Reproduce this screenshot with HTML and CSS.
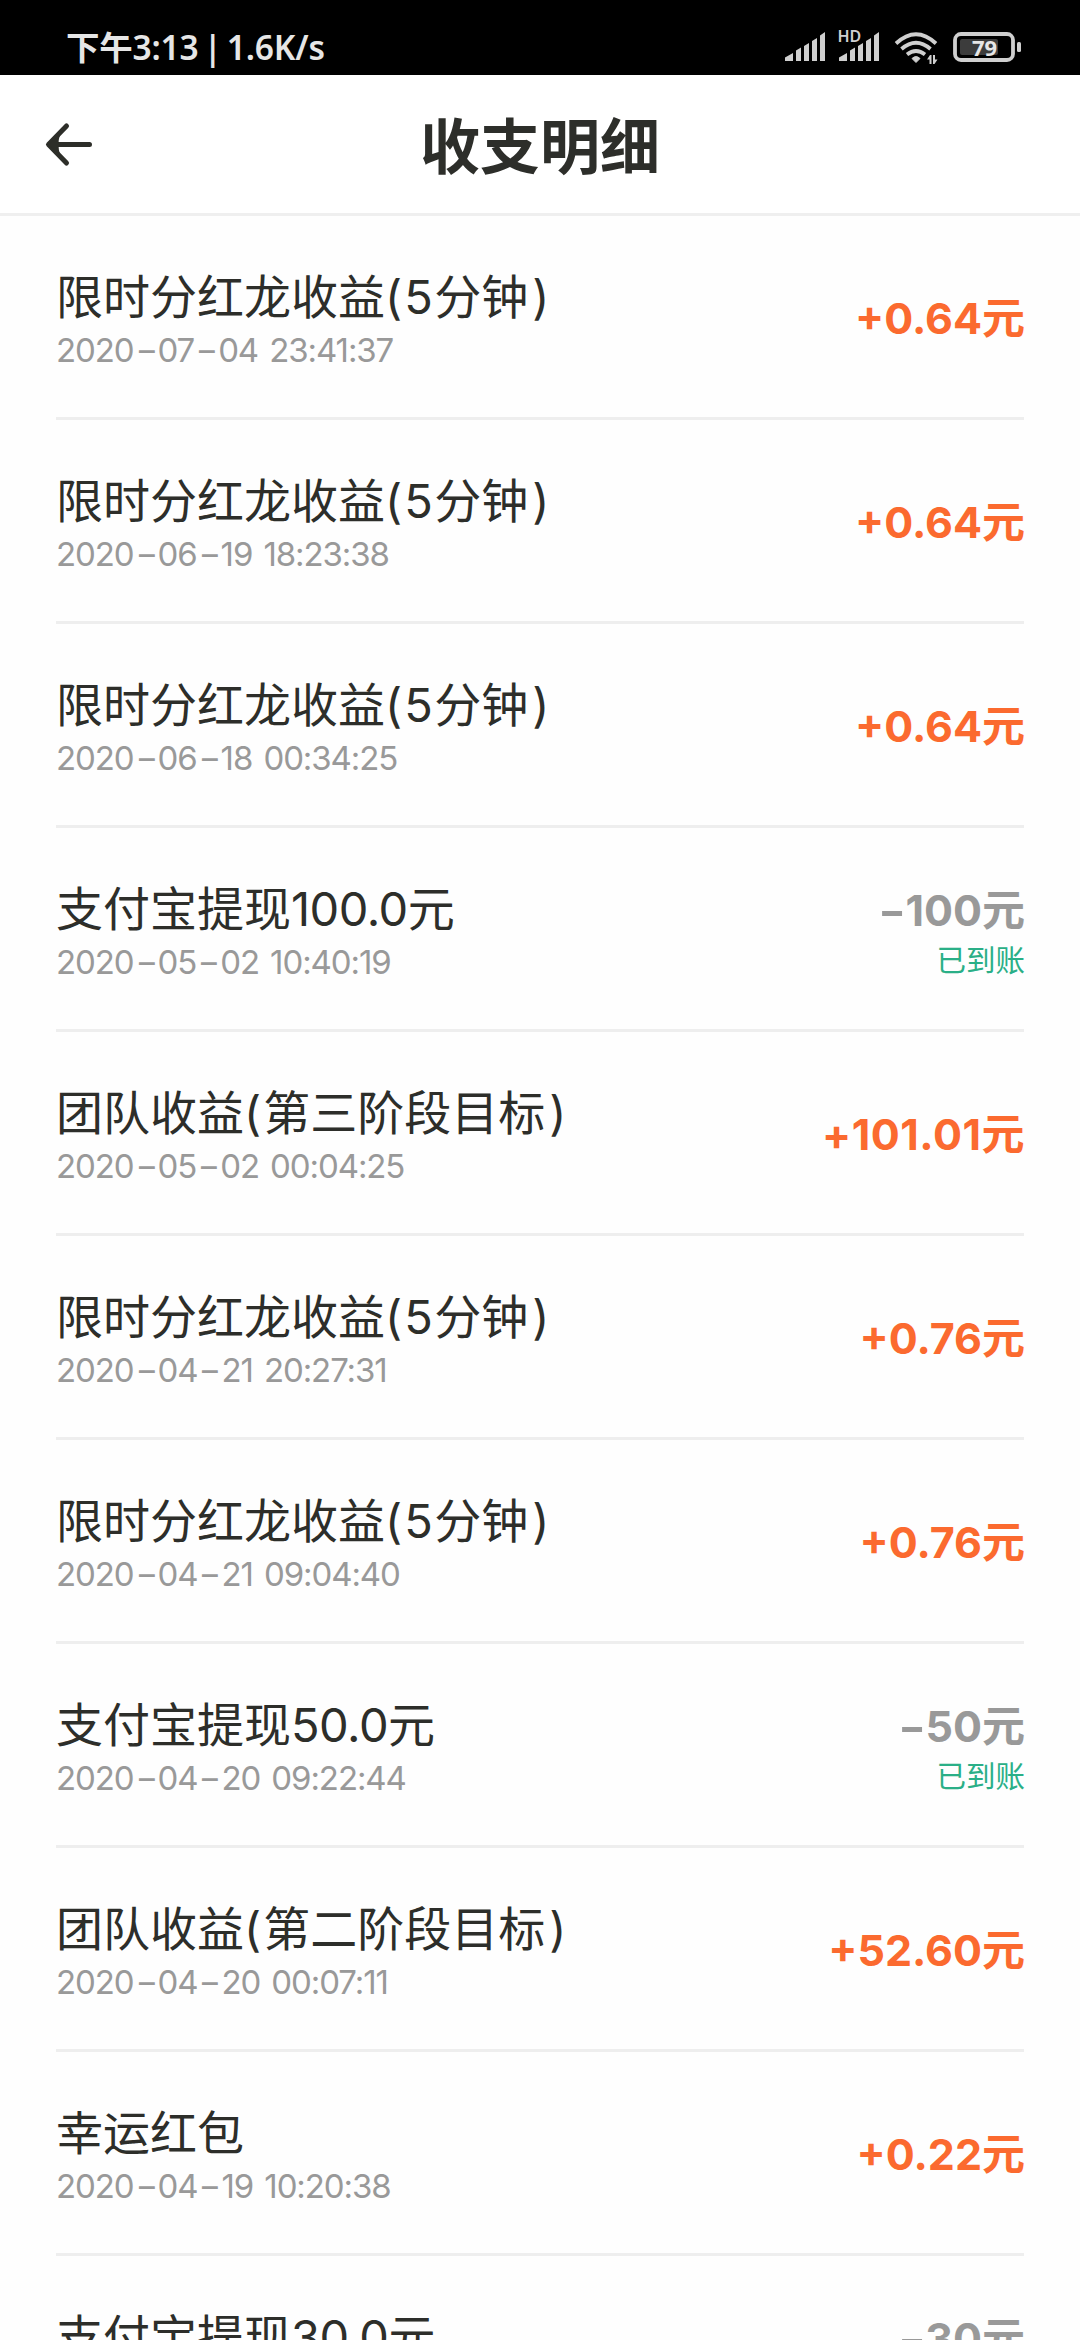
FILE: index.html
```html
<!DOCTYPE html>
<html lang="zh-CN">
<head>
<meta charset="utf-8">
<title>收支明细</title>
<link rel="stylesheet" href="styles.css">
</head>
<body>
<div class="statusbar">
  <div class="clock">下午3:13<span class="pipe">|</span>1.6K/s</div>
  <svg class="indicators" width="236" height="47" viewBox="784 20 236 47">
    <g fill="#cfcfcf">
      <path d="M784 61v-3.500l8-4.500v8zM795 61v-10.500l5-3v13.500zM803 61v-15l5-3v18zM811 61v-20l5-3v23zM819 61v-25.500l5-3.500v29z"/>
      <path d="M838 61v-3.500l8-4.500v8zM849 61v-10.500l5-3v13.500zM857 61v-15l5-3v18zM865 61v-20l5-3v23zM873 61v-25.500l5-3.500v29z"/>
      <path d="M911 58.500q4-3.800 8 0l-4 4z" stroke="#cfcfcf" stroke-width="1" stroke-linejoin="round"/>
      <path d="M926 59.500l3-4.500h1.500v9h-2v-4.500zM932 55h2v4.500h2.500l-3 4.500h-1.500z"/>
      <rect x="1016" y="42" width="4" height="10" rx="1.500"/>
    </g>
    <g fill="none" stroke="#cfcfcf" stroke-width="3.800">
      <path d="M895 43.500Q915 25 935 43.500M900.500 49Q915 36.500 929.500 49M906 54.500Q915 47.500 924 54.500"/>
      <rect x="954" y="34" width="58" height="26" rx="6"/>
    </g>
    <rect x="959" y="39" width="38" height="16" rx="2" fill="#3c3c3c"/>
    <text x="836.500" y="42" class="hd">HD</text>
    <text x="971" y="55.500" class="level">79</text>
  </svg>
</div>
<header class="navbar">
  <svg class="back" width="50" height="46" viewBox="0 0 50 46">
    <path d="M22.500 5 4.500 23.500 22.500 42M5 23.500H45.500" fill="none" stroke="#2d2e29" stroke-width="5" stroke-linecap="round" stroke-linejoin="round"/>
    <path d="M5 23.500l11-10q-3 10 0 20z" fill="#2d2e29"/>
  </svg>
  <h1 class="heading">收支明细</h1>
</header>
<main class="list">
  <section class="row">
    <div class="info"><div class="name">限时分红龙收益<span class="open">(</span><span class="five">5</span>分钟<span class="close">)</span></div><div class="time">2020<span class="dash">-</span>07<span class="dash">-</span>04 23:41:37</div></div>
    <div class="side"><div class="amount in">+0.64元</div></div>
  </section>
  <section class="row">
    <div class="info"><div class="name">限时分红龙收益<span class="open">(</span><span class="five">5</span>分钟<span class="close">)</span></div><div class="time">2020<span class="dash">-</span>06<span class="dash">-</span>19 18:23:38</div></div>
    <div class="side"><div class="amount in">+0.64元</div></div>
  </section>
  <section class="row">
    <div class="info"><div class="name">限时分红龙收益<span class="open">(</span><span class="five">5</span>分钟<span class="close">)</span></div><div class="time">2020<span class="dash">-</span>06<span class="dash">-</span>18 00:34:25</div></div>
    <div class="side"><div class="amount in">+0.64元</div></div>
  </section>
  <section class="row">
    <div class="info"><div class="name">支付宝提现<span class="num">100.0</span>元</div><div class="time">2020<span class="dash">-</span>05<span class="dash">-</span>02 10:40:19</div></div>
    <div class="side raised"><div class="amount out"><span class="dash">-</span>100元</div><div class="state">已到账</div></div>
  </section>
  <section class="row">
    <div class="info"><div class="name">团队收益<span class="open">(</span>第三阶段目标<span class="close">)</span></div><div class="time">2020<span class="dash">-</span>05<span class="dash">-</span>02 00:04:25</div></div>
    <div class="side"><div class="amount in wide">+101.01元</div></div>
  </section>
  <section class="row">
    <div class="info"><div class="name">限时分红龙收益<span class="open">(</span><span class="five">5</span>分钟<span class="close">)</span></div><div class="time">2020<span class="dash">-</span>04<span class="dash">-</span>21 20:27:31</div></div>
    <div class="side"><div class="amount in">+0.76元</div></div>
  </section>
  <section class="row">
    <div class="info"><div class="name">限时分红龙收益<span class="open">(</span><span class="five">5</span>分钟<span class="close">)</span></div><div class="time">2020<span class="dash">-</span>04<span class="dash">-</span>21 09:04:40</div></div>
    <div class="side"><div class="amount in">+0.76元</div></div>
  </section>
  <section class="row">
    <div class="info"><div class="name">支付宝提现<span class="num">50.0</span>元</div><div class="time">2020<span class="dash">-</span>04<span class="dash">-</span>20 09:22:44</div></div>
    <div class="side raised"><div class="amount out"><span class="dash">-</span>50元</div><div class="state">已到账</div></div>
  </section>
  <section class="row">
    <div class="info"><div class="name">团队收益<span class="open">(</span>第二阶段目标<span class="close">)</span></div><div class="time">2020<span class="dash">-</span>04<span class="dash">-</span>20 00:07:11</div></div>
    <div class="side"><div class="amount in">+52.60元</div></div>
  </section>
  <section class="row">
    <div class="info"><div class="name">幸运红包</div><div class="time">2020<span class="dash">-</span>04<span class="dash">-</span>19 10:20:38</div></div>
    <div class="side"><div class="amount in">+0.22元</div></div>
  </section>
  <section class="row last">
    <div class="info"><div class="name">支付宝提现<span class="num">30.0</span>元</div></div>
    <div class="side raised"><div class="amount out"><span class="dash">-</span>30元</div></div>
  </section>
</main>
</body>
</html>
```
FILE: styles.css
```css
* { box-sizing: border-box; }
body {
  margin: 0;
  width: 1080px;
  height: 2340px;
  overflow: hidden;
  background: #fefefe;
  color: #2d2e2a;
  font-family: Inter, "Noto Sans CJK SC", sans-serif;
}
.statusbar {
  display: flex;
  justify-content: space-between;
  align-items: flex-start;
  height: 75px;
  padding: 20px 59px 0 66px;
  background: #000;
}
.clock {
  padding-top: 7px;
  color: #e6e6e6;
  font: 600 33.500px/40px "Noto Sans", "Noto Sans CJK SC", sans-serif;
  letter-spacing: -0.2px;
}
.pipe { margin: 0 5px; }
.indicators { display: block; }
.hd { font: 600 16px "Noto Sans", sans-serif; fill: #cfcfcf; }
.level { font: 700 22px "Noto Sans", sans-serif; fill: #e6e6e6; }
.navbar {
  display: grid;
  grid-template-columns: 50px 1fr 50px;
  align-items: center;
  height: 141px;
  padding: 0 44px;
  border-bottom: 3px solid #efefef;
  background: #fff;
}
.heading {
  margin: 0;
  padding-bottom: 2px;
  text-align: center;
  font: 700 60px/80px "Noto Sans CJK SC", sans-serif;
}
.list { padding: 0 56px; }
.row {
  display: flex;
  justify-content: space-between;
  height: 204px;
  border-bottom: 3px solid #eee;
  white-space: nowrap;
}
.last { height: 84px; border-bottom: 0; overflow: hidden; }
.info { padding-top: 51px; }
.name { font-size: 47px; line-height: 60px; height: 60px; }
.num { letter-spacing: -0.5px; }
.five { letter-spacing: 1.500px; }
.open { letter-spacing: 2px; }
.close { margin-left: 4px; }
.time {
  height: 46px;
  color: #999;
  font-size: 33px;
  line-height: 46px;
  letter-spacing: -1.1px;
  word-spacing: 3px;
}
.time .dash { display: inline-block; width: 24px; text-align: center; transform: scaleX(1.5); }
.side { padding-top: 74px; text-align: right; margin-right: -1px; }
.raised { padding-top: 54px; }
.amount { font-size: 43px; font-weight: 700; line-height: 56px; height: 56px; }
.amount .dash { display: inline-block; transform: scaleX(1.4); margin-right: 3px; }
.wide { letter-spacing: 0.5px; }
.in { color: #fb6a2f; }
.out { color: #999; }
.state { color: #2aaf87; font-size: 29.500px; line-height: 44px; height: 44px; }
```
